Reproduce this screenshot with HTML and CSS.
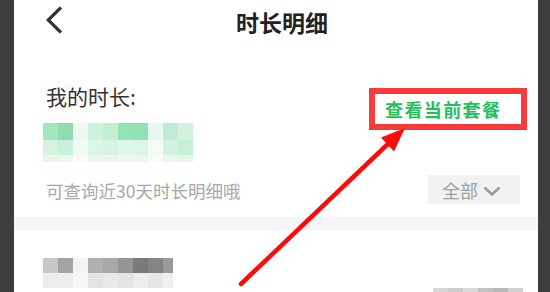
FILE: index.html
```html
<!DOCTYPE html>
<html lang="zh-CN">
<head>
<meta charset="utf-8">
<title>时长明细</title>
<link rel="stylesheet" href="styles.css">
</head>
<body>
<div class="main">
  <div class="header">
    <svg class="back" width="16" height="28" viewBox="0 0 16 28"><polyline points="15,1.5 2.2,14 15,26.5" fill="none" stroke="#333" stroke-width="3.2" stroke-linejoin="miter"/></svg>
    <div class="title">时长明细</div>
  </div>
  <div class="summary">
    <div class="left">
      <div class="label">我的时长:</div>
      <div class="mosaic green">
        <i style="background:#a5e6c0"></i><i style="background:#8de0ae"></i><i style="background:#edf9f1"></i><i style="background:#cdf1dc"></i><i style="background:#c2eed4"></i><i style="background:#95e2b4"></i><i style="background:#93e1b3"></i><i style="background:#e8f8ee"></i><i style="background:#bfecd2"></i><i style="background:#d2f2df"></i>
        <i style="background:#d4f3e1"></i><i style="background:#c9f0da"></i><i style="background:#f0fbf4"></i><i style="background:#dcf5e7"></i><i style="background:#d6f3e2"></i><i style="background:#e0f6e9"></i><i style="background:#dcf5e6"></i><i style="background:#f2fbf6"></i><i style="background:#d2f2e0"></i><i style="background:#c6efd8"></i>
        <i style="background:#e6f8ed"></i><i style="background:#e8f8ee"></i><i style="background:#f6fcf8"></i><i style="background:#eaf8ef"></i><i style="background:#e8f8ee"></i><i style="background:#ecf9f1"></i><i style="background:#eaf8ef"></i><i style="background:#f6fcf8"></i><i style="background:#e6f7ec"></i><i style="background:#e2f6ea"></i>
      </div>
    </div>
    <div class="plan"><span class="plan-text">查看当前套餐</span></div>
  </div>
  <div class="filter">
    <div class="hint">可查询近30天时长明细哦</div>
    <div class="select">
      <span>全部</span>
      <svg class="caret" width="18" height="10" viewBox="0 0 18 10"><polyline points="1.5,1.5 9,8.5 16.5,1.5" fill="none" stroke="#9a9a9a" stroke-width="2.6"/></svg>
    </div>
  </div>
  <div class="band"></div>
  <div class="record">
    <div class="mosaic gray">
      <i style="background:#c8c8c8"></i><i style="background:#a4a4a4"></i><i style="background:#f3f3f3"></i><i style="background:#b0b0b0"></i><i style="background:#a8a8a8"></i><i style="background:#959595"></i><i style="background:#7a7a7a"></i><i style="background:#848484"></i><i class="last" style="background:#999"></i>
      <i style="background:#ececec"></i><i style="background:#eeeeee"></i><i style="background:#f7f7f7"></i><i style="background:#e4e4e4"></i><i style="background:#e9e9e9"></i><i style="background:#e4e4e4"></i><i style="background:#ececec"></i><i style="background:#e6e6e6"></i><i class="last" style="background:#f0f0f0"></i>
    </div>
    <div class="amount">
      <i style="background:#d6d6d6"></i><i style="background:#cdcdcd"></i><i style="background:#dadada"></i><i style="background:#c2c2c2"></i><i style="background:#b8b8b8"></i><i style="background:#d0d0d0"></i>
    </div>
  </div>
</div>
<svg class="arrow" width="550" height="292" viewBox="0 0 550 292">
  <line x1="241" y1="284" x2="390" y2="142" stroke="#ff0a0a" stroke-width="4.5" stroke-linecap="round"/>
  <polygon points="405,128 394,151.4 381,137.6" fill="#ff0a0a"/>
</svg>
</body>
</html>
```

FILE: styles.css
```css
html, body {
  margin: 0;
  padding: 0;
}
body {
  width: 550px;
  height: 292px;
  overflow: hidden;
  background: #3e3e3e;
  position: relative;
  font-family: "Noto Sans CJK SC", "Noto Sans", sans-serif;
}
.main {
  margin-left: 14px;
  width: 524px;
  height: 292px;
  background: #fff;
  overflow: hidden;
}
.header {
  height: 44px;
  display: flex;
  align-items: flex-start;
}
.back {
  margin-left: 32px;
  margin-top: 6px;
  flex: none;
}
.title {
  margin-left: 174px;
  font-size: 23px;
  line-height: 44px;
  font-weight: 700;
  color: #222;
}
.summary {
  margin-top: 40px;
  display: flex;
  justify-content: space-between;
  align-items: flex-start;
  padding: 0 11px 0 29px;
}
.label {
  font-size: 21px;
  line-height: 25px;
  color: #333;
  padding-left: 3px;
}
.mosaic {
  display: grid;
  margin-top: 14px;
}
.mosaic.green {
  grid-template-columns: repeat(10, 15px);
  grid-template-rows: 17px 15px 7px;
}
.mosaic i, .amount i {
  display: block;
}
.plan {
  margin-top: 4px;
  width: 158px;
  height: 42px;
  box-sizing: border-box;
  border: 6px solid #f83a3a;
  padding-left: 10px;
  display: flex;
  align-items: center;
}
.plan-text {
  font-size: 18px;
  line-height: 30px;
  font-weight: 700;
  letter-spacing: 1.4px;
  color: #20c05c;
  white-space: nowrap;
}
.filter {
  margin-top: 13px;
  height: 29px;
  display: flex;
  justify-content: space-between;
  align-items: center;
  padding: 0 18px 0 32px;
}
.hint {
  font-size: 17.5px;
  line-height: 24px;
  color: #a8a8a8;
  margin-top: 3px;
  white-space: nowrap;
}
.select {
  width: 92px;
  height: 29px;
  box-sizing: border-box;
  background: #f2f2f2;
  padding-left: 14px;
  display: flex;
  align-items: center;
  font-size: 18px;
  line-height: 24px;
  color: #a0a0a0;
}
.caret {
  margin-left: 5px;
  margin-top: 2px;
}
.band {
  margin-top: 13px;
  height: 13px;
  background: #f4f6f8;
}
.record {
  padding: 28px 15px 0 29px;
  display: flex;
  justify-content: space-between;
  align-items: flex-start;
}
.mosaic.gray {
  margin-top: 0;
  grid-template-columns: repeat(8, 15px) 10px;
  grid-template-rows: 15px 15px;
}
.amount {
  margin-top: 30px;
  display: grid;
  grid-template-columns: repeat(6, 15px);
  grid-template-rows: 6px;
}
.arrow {
  position: absolute;
  left: 0;
  top: 0;
  pointer-events: none;
}
```
